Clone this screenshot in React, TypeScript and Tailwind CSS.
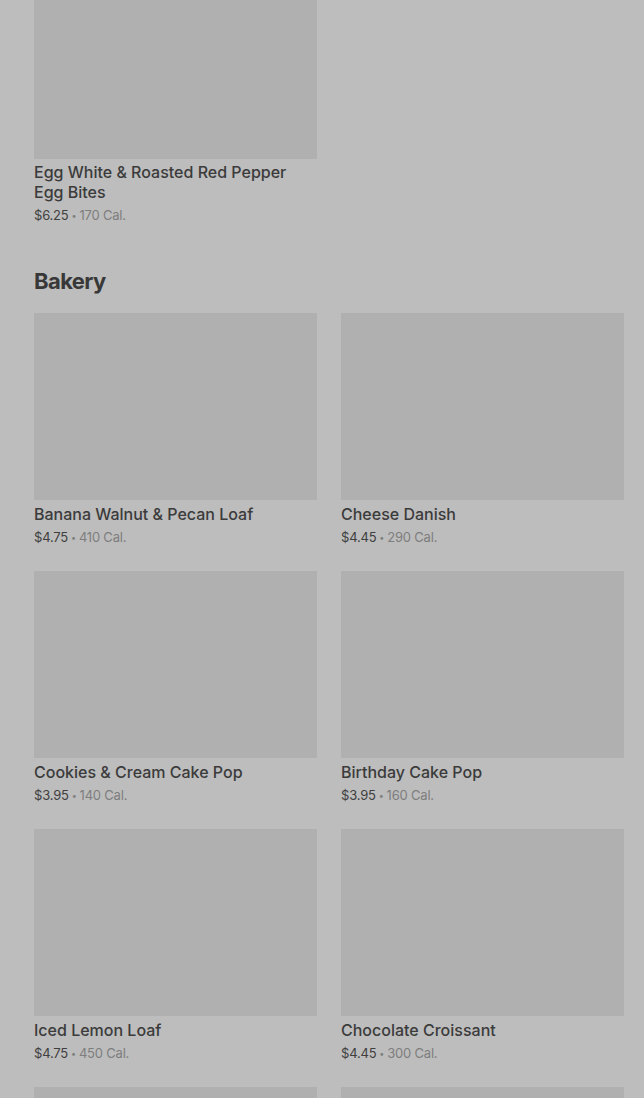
import React from "react";

type Item = { name: string; price: string; cal: string };

const bakery: Item[] = [
  { name: "Banana Walnut & Pecan Loaf", price: "$4.75", cal: "410 Cal." },
  { name: "Cheese Danish", price: "$4.45", cal: "290 Cal." },
  { name: "Cookies & Cream Cake Pop", price: "$3.95", cal: "140 Cal." },
  { name: "Birthday Cake Pop", price: "$3.95", cal: "160 Cal." },
  { name: "Iced Lemon Loaf", price: "$4.75", cal: "450 Cal." },
  { name: "Chocolate Croissant", price: "$4.45", cal: "300 Cal." },
];

function Price({ price, cal }: { price: string; cal: string }) {
  return (
    <div className="mt-[4px] h-[18px] text-[13px] leading-[18px] tracking-[-0.2px] text-[#3f3f3f]">
      {price}
      <span className="text-[#7e7e7e]">
        <span className="mx-[3px] text-[9px] leading-[9px] align-[1px]">•</span>
        {cal}
      </span>
    </div>
  );
}

function Card({ item }: { item: Item }) {
  return (
    <div className="flex flex-col">
      <div className="w-full h-[187px] bg-[#b0b0b0]" />
      <div className="mt-[4px] text-[16px] leading-[20px] font-medium text-[#3b3b3b]">{item.name}</div>
      <Price price={item.price} cal={item.cal} />
    </div>
  );
}

export default function App() {
  return (
    <div
      className="h-[1098px] w-[644px] bg-[#bdbdbd] pl-[34px] pr-[20px] overflow-hidden"
      style={{ fontFamily: "Inter, 'Noto Sans', sans-serif" }}
    >
      <div className="grid grid-cols-2 gap-x-[24px]">
        <div className="flex flex-col">
          <div className="w-full h-[159px] bg-[#b0b0b0]" />
          <div className="mt-[3px] text-[16px] leading-[20px] font-medium text-[#3b3b3b]">
            Egg White &amp; Roasted Red Pepper Egg Bites
          </div>
          <Price price="$6.25" cal="170 Cal." />
        </div>
      </div>
      <h2 className="mt-[41px] text-[22px] leading-[32px] font-bold tracking-[-0.6px] text-[#383838]">Bakery</h2>
      <div className="mt-[16px] grid grid-cols-2 gap-x-[24px] gap-y-[25px]">
        {bakery.map((it, i) => (
          <Card key={i} item={it} />
        ))}
        <div className="w-full h-[187px] bg-[#b0b0b0]" />
        <div className="w-full h-[187px] bg-[#b0b0b0]" />
      </div>
    </div>
  );
}
